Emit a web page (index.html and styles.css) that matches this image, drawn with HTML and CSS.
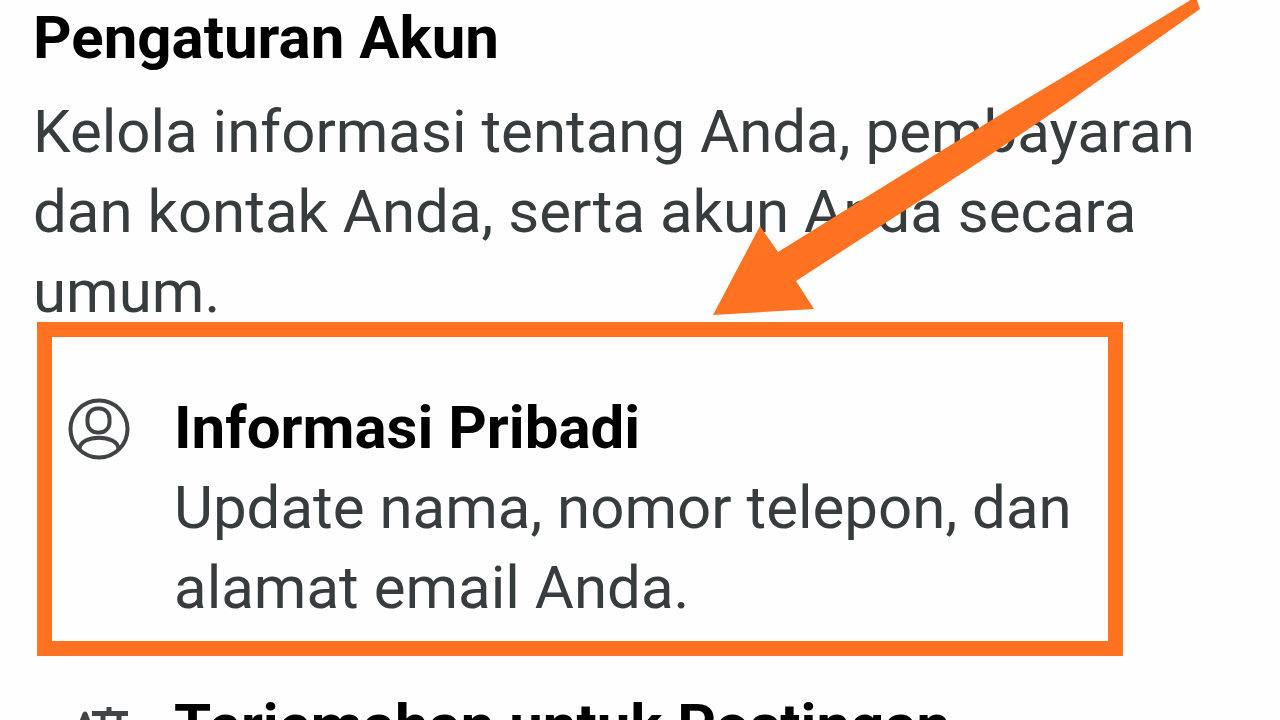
FILE: index.html
```html
<!DOCTYPE html>
<html lang="id">
<head>
  <meta charset="UTF-8" />
  <meta name="viewport" content="width=device-width, initial-scale=1.0"/>
  <title>Pengaturan Akun</title>
  <link rel="stylesheet" href="styles.css">
</head>
<body>

  <main class="settings">
    <h1>Pengaturan Akun</h1>
    <p class="intro">Kelola informasi tentang Anda, pembayaran dan kontak Anda, serta akun Anda secara umum.</p>

    <!-- Settings list -->
    <section class="item highlight">
      <svg class="icon" viewBox="0 0 62 62" aria-hidden="true">
        <circle cx="31" cy="31" r="28.5" />
        <rect x="19.500" y="10.500" width="22" height="24" rx="10" />
        <path d="M11.500 51C12 36 50 36 50.500 51" />
      </svg>
      <div>
        <h2>Informasi Pribadi</h2>
        <p>Update nama, nomor telepon, dan alamat email Anda.</p>
      </div>
    </section>

    <section class="item">
      <svg class="icon language" viewBox="0 0 62 62" aria-hidden="true">
        <path d="M2 56L17 18L32 56M7 44H27" />
        <path d="M24 17.500H60M41 11V17M35 17V30C35 36 31 42 27 45M51 17V36C51 41 55 43 58 40" />
      </svg>
      <div>
        <h2>Terjemahan untuk Postingan</h2>
      </div>
    </section>
  </main>

  <!-- Arrow over the page -->
  <svg class="arrow" viewBox="0 0 488 316" aria-hidden="true">
    <path d="M1 315L48 226L66 252L198 170L301 107L388 55L477 1L480 -2L484 -2L488 9L355 103L275 157L198 207L84 281L102 309Z" />
  </svg>

</body>
</html>
```
FILE: styles.css
```css
body {
  font-family: Roboto, Arial, sans-serif;
  font-size: 60px;
  line-height: 80px;
  margin: 0;
  height: 100vh;
  overflow: hidden;
  position: relative;
  background: #fefefe;
  color: #373d3e;
}

h1, h2, p {
  margin: 0;
}

h1, h2 {
  font-size: 60px;
  font-weight: bold;
  color: #000;
}

h1 {
  line-height: 76px;
}

.settings {
  padding: 0 33px;
}

.intro {
  margin-top: 16px;
}

/* Settings list */
.item {
  display: flex;
  align-items: flex-start;
  gap: 44px;
  margin: 30px 0 0 35px;
}

.highlight {
  margin: -10px 124px 0 4px;
  padding: 51px 16px 13px;
  border: 15px solid #ff7222;
}

.icon {
  flex: none;
  width: 62px;
  height: 62px;
  margin-top: 10px;
  fill: none;
  stroke: #404446;
  stroke-width: 4;
}

.language {
  stroke-width: 5;
  stroke-linejoin: round;
}

.arrow {
  position: absolute;
  top: 0;
  right: 80px;
  width: 488px;
  height: 316px;
  fill: #ff7222;
}
```
